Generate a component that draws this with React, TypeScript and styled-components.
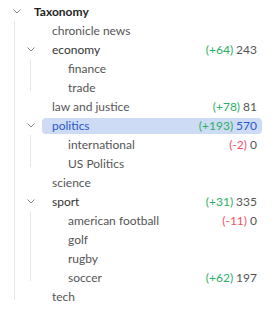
import styled, { createGlobalStyle } from 'styled-components'

const Global = createGlobalStyle`
  body {
    margin: 0;
    background: #fff;
    font-family: Lato, "Open Sans", sans-serif;
    font-size: 12px;
  }
`

type Node = {
  label: string
  delta?: number
  count?: number
  children?: Node[]
}

const tree: Node = {
  label: 'Taxonomy',
  children: [
    { label: 'chronicle news' },
    {
      label: 'economy',
      delta: 64,
      count: 243,
      children: [{ label: 'finance' }, { label: 'trade' }],
    },
    { label: 'law and justice', delta: 78, count: 81 },
    {
      label: 'politics',
      delta: 193,
      count: 570,
      children: [{ label: 'international', delta: -2, count: 0 }, { label: 'US Politics' }],
    },
    { label: 'science' },
    {
      label: 'sport',
      delta: 31,
      count: 335,
      children: [
        { label: 'american football', delta: -11, count: 0 },
        { label: 'golf' },
        { label: 'rugby' },
        { label: 'soccer', delta: 62, count: 197 },
      ],
    },
    { label: 'tech' },
  ],
}

const Page = styled.div`
  width: 279px;
  padding-top: 2px;
  padding-right: 17px;
  box-sizing: border-box;
`

const Row = styled.div`
  display: flex;
  align-items: center;
  height: 19px;
`

const Toggle = styled.span<{ $root?: boolean }>`
  flex: none;
  display: flex;
  align-items: center;
  margin-left: ${(p) => (p.$root ? '13px' : '12px')};
  width: ${(p) => (p.$root ? '11px' : '15px')};
  height: 19px;
  color: #8a8a8a;
`

const Item = styled.div<{ $selected?: boolean }>`
  flex: 1;
  display: flex;
  align-items: center;
  justify-content: space-between;
  height: 16px;
  padding: 0 5px 0 10px;
  border-radius: 4px;
  background: ${(p) => (p.$selected ? '#cddcf4' : 'transparent')};
`

const Label = styled.span<{ $strong?: boolean; $parent?: boolean; $selected?: boolean }>`
  white-space: nowrap;
  font-weight: ${(p) => (p.$strong ? 700 : 400)};
  color: ${(p) => (p.$selected ? '#2a57cf' : p.$strong ? '#1f1f1f' : p.$parent ? '#333' : '#555')};
`

const Count = styled.span<{ $selected?: boolean }>`
  white-space: nowrap;
  color: ${(p) => (p.$selected ? '#2a57cf' : '#555')};
`

const Delta = styled.span<{ $neg?: boolean }>`
  color: ${(p) => (p.$neg ? '#f4506a' : '#2daf68')};
  margin-right: 3px;
`

const Children = styled.div<{ $root?: boolean }>`
  position: relative;
  margin-left: ${(p) => (p.$root ? '14px' : '15px')};
  padding-left: 1px;

  &::before {
    content: '';
    position: absolute;
    left: 0;
    top: 0;
    bottom: 6px;
    width: 1px;
    background: #e7e7e7;
  }
`

const Chevron = () => (
  <svg width="8" height="5" viewBox="0 0 8 5" fill="none">
    <path d="M0.5 0.5 L4 4 L7.5 0.5" stroke="currentColor" strokeWidth="1" />
  </svg>
)

function TreeNode({ node, depth }: { node: Node; depth: number }) {
  const root = depth === 0
  const parent = !!node.children
  const selected = node.label === 'politics'
  const delta = node.delta ?? 0
  return (
    <div>
      <Row>
        <Toggle $root={root}>{parent && <Chevron />}</Toggle>
        <Item $selected={selected}>
          <Label $strong={root} $parent={parent} $selected={selected}>
            {node.label}
          </Label>
          {node.count !== undefined && (
            <Count $selected={selected}>
              <Delta $neg={delta < 0}>
                ({delta > 0 ? '+' : '-'}
                {Math.abs(delta)})
              </Delta>
              {node.count}
            </Count>
          )}
        </Item>
      </Row>
      {node.children && (
        <Children $root={root}>
          {node.children.map((c) => (
            <TreeNode key={c.label} node={c} depth={depth + 1} />
          ))}
        </Children>
      )}
    </div>
  )
}

export default function App() {
  return (
    <>
      <Global />
      <Page>
        <TreeNode node={tree} depth={0} />
      </Page>
    </>
  )
}
